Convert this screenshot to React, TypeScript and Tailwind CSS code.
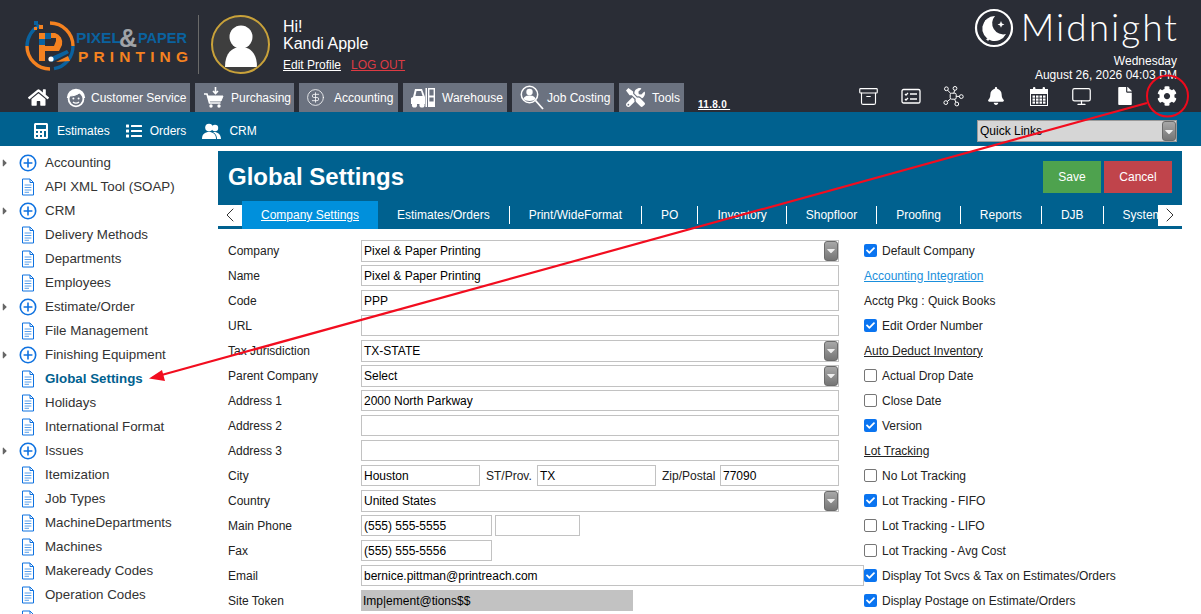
import React from "react";
import {
  FaBell,
  FaCalculator,
  FaCog,
  FaFile,
  FaHome,
  FaList,
  FaTools,
  FaCheck,
  FaCaretDown,
  FaCaretRight,
} from "react-icons/fa";
import { Archive, ChevronLeft, ChevronRight, CircleDollarSign, Monitor } from "lucide-react";

const font = { fontFamily: '"Liberation Sans", Arial, sans-serif' };

const Logo = () => (
  <svg width="172" height="60" viewBox="0 0 172 60" className="shrink-0">
    {/* ring */}
    <g fill="none" strokeWidth="3.4">
      <path d="M26 3 A23 23 0 0 1 49 26" stroke="#f58220" />
      <path d="M49 26 A23 23 0 0 1 30 48.7" stroke="#0a629f" />
      <path d="M26 49 A23 23 0 0 1 3 26" stroke="#f58220" />
      <path d="M3 26 A23 23 0 0 1 16 5.3" stroke="#0a629f" />
    </g>
    <rect x="10" y="1" width="4" height="4" fill="#0a629f" />
    <rect x="15" y="5" width="4" height="4" fill="#f58220" />
    <rect x="10" y="7" width="3" height="3" fill="#f58220" />
    {/* P */}
    <rect x="15" y="13" width="6" height="6" fill="#f58220" />
    <rect x="21" y="13" width="6" height="6" fill="#0a629f" />
    <rect x="15" y="19" width="6" height="6" fill="#0a629f" />
    <rect x="15" y="25" width="6" height="16" fill="#f58220" />
    <path d="M27 13 h4 a10 10 0 0 1 7 12 l-3 6 h-14 v-5 h9 l2 -5 v-3 h-5z" fill="#f58220" />
    <path d="M25 38 L43 30 L45 33 L28 42 Z" fill="#0a629f" />
    <circle cx="27" cy="39" r="2.6" fill="#fff" />
    <path d="M32 42 L44 36 L46 41 Z" fill="#f58220" />
    <text x="52" y="23" fontSize="15" fontWeight="700" fill="#0a629f" style={font} textLength="45" lengthAdjust="spacingAndGlyphs">
      PIXEL
    </text>
    <text x="114" y="23" fontSize="15" fontWeight="700" fill="#0a629f" style={font} textLength="49" lengthAdjust="spacingAndGlyphs">
      PAPER
    </text>
    <text x="95" y="27" fontSize="25" fontWeight="700" fill="#a0a3a8" style={font}>
      &amp;
    </text>
    <text x="54" y="42" fontSize="15.5" fontWeight="700" fill="#f58220" style={font} textLength="110" lengthAdjust="spacing">
      PRINTING
    </text>
  </svg>
);

const Avatar = () => (
  <div className="flex h-[59px] w-[59px] shrink-0 items-center justify-center overflow-hidden rounded-full border-2 border-[#c9a23a] bg-[#3e3e3e]">
    <svg width="55" height="55" viewBox="0 0 55 55">
      <circle cx="28" cy="20" r="11.5" fill="#fff" />
      <path d="M12 50 C12 36 19 30 28 30 C37 30 44 36 44 50 Z" fill="#fff" />
    </svg>
  </div>
);

const MoonLogo = () => (
  <svg width="40" height="40" viewBox="0 0 40 40" className="shrink-0">
    <circle cx="20" cy="20" r="18" fill="none" stroke="#fff" strokeWidth="2.2" />
    <path d="M21 8 A12.5 12.5 0 1 0 32 26 A11 11 0 0 1 21 8 Z" fill="#fff" />
    <path d="M27 13 l1 2.4 2.4 1 -2.4 1 -1 2.4 -1 -2.4 -2.4 -1 2.4 -1z" fill="#fff" />
    <circle cx="12" cy="13" r="1" fill="#fff" />
    <path d="M14 29 l.7 1.6 1.6 .7 -1.6 .7 -.7 1.6 -.7 -1.6 -1.6 -.7 1.6 -.7z" fill="#fff" />
  </svg>
);

const FaceIcon = () => (
  <svg width="22" height="22" viewBox="0 0 22 22" fill="none" stroke="#fff">
    <path d="M3 11 A8 8 0 0 1 19 11" strokeWidth="2.4" />
    <circle cx="11" cy="12" r="7.4" strokeWidth="1.8" />
    <path d="M4 9 C8 9 13 8 15 5 C16 7 17 8 18 9 L17 5 L11 3 L5 5Z" fill="#fff" strokeWidth="1" />
    <circle cx="8.4" cy="11.6" r="1" fill="#fff" stroke="none" />
    <circle cx="13.6" cy="11.6" r="1" fill="#fff" stroke="none" />
    <path d="M8 15 C9.5 16.6 12.5 16.6 14 15" strokeWidth="1.2" />
  </svg>
);

const CartIcon = () => (
  <svg width="24" height="24" viewBox="0 0 24 24" fill="none" stroke="#fff">
    <path d="M2 8 h3 l2.5 9 h11" strokeWidth="1.6" />
    <path d="M6 10 h15 l-2 5 H7.4z" fill="#fff" strokeWidth="1" />
    <circle cx="9" cy="20" r="1.7" fill="#fff" stroke="none" />
    <circle cx="17" cy="20" r="1.7" fill="#fff" stroke="none" />
    <path d="M13.5 1 v6 M11 5 l2.5 2.5 L16 5" strokeWidth="1.6" />
  </svg>
);

const ForkliftIcon = () => (
  <svg width="26" height="22" viewBox="0 0 26 22" fill="#fff">
    <path d="M3 10 L5 2 H12 L15 10 V17 H1 V11 Z M6.5 4 L5.4 9 H12.6 L11 4Z" fillRule="evenodd" />
    <circle cx="4.5" cy="18" r="2.6" />
    <circle cx="12" cy="18" r="2.6" />
    <rect x="15.5" y="1" width="1.5" height="19" />
    <path d="M18 1 h7 v19 h-7z M19.4 2.6 v6 h4.2 v-6z M19.4 10.4 v4 h4.2 v-4z" fillRule="evenodd" />
  </svg>
);

const SearchPersonIcon = () => (
  <svg width="26" height="26" viewBox="0 0 26 26" fill="none" stroke="#fff">
    <circle cx="10.5" cy="9.5" r="8.2" strokeWidth="1.5" />
    <path d="M16.5 15.5 L24 24" strokeWidth="1.8" />
    <circle cx="10.5" cy="7" r="3.2" fill="#fff" stroke="none" />
    <path d="M4.5 14 C5 11 8 10.4 10.5 10.4 C13 10.4 16 11 16.5 14 C14.5 16.6 6.5 16.6 4.5 14Z" fill="#fff" stroke="none" />
  </svg>
);

const TaskCardIcon = () => (
  <svg width="20" height="17" viewBox="0 0 20 17" fill="none" stroke="#fff" strokeWidth="1.3">
    <rect x="1" y="1.5" width="18" height="13.5" rx="1.6" />
    <path d="M4 6 l1 1 2-2 M4 11 l1 1 2-2" />
    <path d="M9 6 h7 M9 11 h7" strokeWidth="1.6" />
  </svg>
);

const NetworkIcon = () => (
  <svg width="21" height="21" viewBox="0 0 21 21" fill="none" stroke="#fff" strokeWidth="1">
    <rect x="7.2" y="7.2" width="6" height="6" rx="1.4" />
    <circle cx="3.4" cy="2.8" r="1.9" />
    <circle cx="12" cy="2.4" r="1.9" />
    <circle cx="18.3" cy="10.6" r="1.9" />
    <circle cx="13.8" cy="18" r="1.9" />
    <circle cx="2.8" cy="16.6" r="1.9" />
    <path d="M4.6 4.2 L7.8 7.6 M11.6 4.3 L10.8 7.2 M16.4 10.4 H13.2 M12.8 16.2 L11.6 13.2 M4.4 15.4 L7.6 12.8" />
  </svg>
);

const CalendarIcon = () => (
  <svg width="20" height="21" viewBox="0 0 20 21" fill="#fff">
    <path d="M1 3 H19 V20 H1Z M2 8 V19 H18 V8Z" fillRule="evenodd" />
    <rect x="4" y="1" width="2.4" height="4" rx="1" />
    <rect x="13.6" y="1" width="2.4" height="4" rx="1" />
    {[3.5, 7, 10.5, 14].map((x) =>
      [9.5, 12.5, 15.5].map((y) => <rect key={`${x}-${y}`} x={x} y={y} width="2.5" height="2.2" />),
    )}
  </svg>
);

const CrmIcon = () => (
  <svg width="19" height="17" viewBox="0 0 19 17" fill="#fff">
    <circle cx="7" cy="4.6" r="3.8" />
    <path d="M0 16 C0 11 3 9 7 9 C11 9 14 11 14 16Z" />
    <circle cx="13" cy="5" r="3.2" />
    <path d="M11 9 C15 8.5 19 11 19 16 H15 C15 13 14 11 11 9Z" />
  </svg>
);

const PlusIcon = () => (
  <svg width="18" height="18" viewBox="0 0 18 18" fill="none" stroke="#0f72e0" className="shrink-0">
    <circle cx="9" cy="9" r="7.7" strokeWidth="1.6" />
    <path d="M9 4.6 V13.4 M4.6 9 H13.4" strokeWidth="1.6" />
  </svg>
);

const DocIcon = () => (
  <svg width="18" height="18" viewBox="0 0 18 18" fill="none" stroke="#0f72e0" className="shrink-0">
    <path d="M3.5 1 H11 L14.5 4.5 V17 H3.5 Z" strokeWidth="1" />
    <path d="M11 1 V4.5 H14.5" strokeWidth="1" />
    <path d="M5.6 7 H12.4 M5.6 9.5 H12.4 M5.6 12 H12.4 M5.6 14.3 H10" strokeWidth="1" stroke="#5ba0ea" />
  </svg>
);

const navTabs = [
  { label: "Customer Service", icon: <FaceIcon />, w: "w-[132px]", gap: "gap-[4px]" },
  { label: "Purchasing", icon: <CartIcon />, w: "w-[99px]", gap: "gap-[5px]" },
  { label: "Accounting", icon: <CircleDollarSign size={19} strokeWidth={1} color="#fff" />, w: "w-[99px]", gap: "gap-[9px]" },
  { label: "Warehouse", icon: <ForkliftIcon />, w: "w-[104px]", gap: "gap-[6px]" },
  { label: "Job Costing", icon: <SearchPersonIcon />, w: "w-[102px]", gap: "gap-[2px]" },
  { label: "Tools", icon: <FaTools size={19} color="#fff" />, w: "w-[65px]", gap: "gap-[7px]" },
];

const sideItems: [string, boolean][] = [
  ["Accounting", true],
  ["API XML Tool (SOAP)", false],
  ["CRM", true],
  ["Delivery Methods", false],
  ["Departments", false],
  ["Employees", false],
  ["Estimate/Order", true],
  ["File Management", false],
  ["Finishing Equipment", true],
  ["Global Settings", false],
  ["Holidays", false],
  ["International Format", false],
  ["Issues", true],
  ["Itemization", false],
  ["Job Types", false],
  ["MachineDepartments", false],
  ["Machines", false],
  ["Makeready Codes", false],
  ["Operation Codes", false],
  ["Order Import Setup", false],
];

const settingTabs = [
  "Estimates/Orders",
  "Print/WideFormat",
  "PO",
  "Inventory",
  "Shopfloor",
  "Proofing",
  "Reports",
  "DJB",
  "System",
];

const Input = ({ value = "", className = "flex-1" }: { value?: string; className?: string }) => (
  <div className={`flex h-[21px] shrink-0 items-center border border-[#c2c2c2] pl-[2px] text-[12px] text-black ${className}`}>
    {value}
  </div>
);

const SelectArrow = () => (
  <div className="flex h-[20px] w-[14px] items-center justify-center rounded-[3px] border border-[#6b6b6b] bg-linear-to-b from-[#a8a8a8] to-[#767676]">
    <FaCaretDown size={13} color="#efefef" />
  </div>
);

const SelectBox = ({ value }: { value: string }) => (
  <div className="flex h-[22px] w-[478px] shrink-0 items-center justify-between border border-[#c2c2c2] pl-[2px] text-[12px] text-black">
    {value}
    <SelectArrow />
  </div>
);

const Row = ({ label, children }: { label: string; children: React.ReactNode }) => (
  <div className="flex h-[25px] items-center">
    <div className="w-[133px] shrink-0 text-[12px] text-[#222]">{label}</div>
    {children}
  </div>
);

const Check = ({ label, on = false }: { label: string; on?: boolean }) => (
  <div className="flex h-[25px] items-center gap-[5px] text-[12px] text-[#222]">
    {on ? (
      <div className="flex h-[13px] w-[13px] items-center justify-center rounded-[2px] bg-[#0a74f0]">
        <FaCheck size={9} color="#fff" />
      </div>
    ) : (
      <div className="h-[13px] w-[13px] rounded-[2px] border border-[#767676] bg-white" />
    )}
    {label}
  </div>
);

const Heading = ({ label, className = "text-[#222]" }: { label: string; className?: string }) => (
  <div className={`flex h-[25px] items-center text-[12px] underline ${className}`}>{label}</div>
);

export default function App() {
  return (
    <div className="relative h-[614px] w-[1201px] overflow-hidden bg-white" style={font}>
      {/* top header */}
      <header className="h-[112px] bg-[#2a2d36] text-white">
        <div className="flex h-[83px] justify-between pr-6">
          <div className="flex items-start">
            <div className="ml-[24px] mt-[20px] w-[174px]">
              <Logo />
            </div>
            <div className="mt-[15px] h-[59px] w-px bg-[#6a6a6a]" />
            <div className="ml-[12px] mt-[15px]">
              <Avatar />
            </div>
            <div className="ml-[13px] mt-[18px]">
              <div className="text-[16px] leading-[17px]">Hi!</div>
              <div className="text-[16px] leading-[18px]">Kandi Apple</div>
              <div className="mt-[5px] flex gap-[10px] text-[12px] leading-[14px]">
                <span className="underline">Edit Profile</span>
                <span className="text-[#dd3b44] underline">LOG OUT</span>
              </div>
            </div>
          </div>
          <div className="flex flex-col items-end">
            <div className="-mr-[2px] mt-[8px] flex items-center gap-[7px]">
              <MoonLogo />
              <span className="-mt-[2px] text-[37px] font-light leading-[40px] tracking-[2px]" style={{ fontFamily: "Lato, sans-serif" }}>
                Midnight
              </span>
            </div>
            <div className="mt-[6px] text-right text-[12px] leading-[14px]">
              <div>Wednesday</div>
              <div>August 26, 2026 04:03 PM</div>
            </div>
          </div>
        </div>
        <div className="flex h-[29px] items-end">
          <div className="ml-[28px] flex h-[29px] w-[30px] items-start pt-[4px]">
            <FaHome size={21} color="#fff" />
          </div>
          {navTabs.map((t, i) => (
            <div
              key={t.label}
              className={`flex h-[29px] items-center bg-[#6b7280] pl-[7px] text-[12px] ${t.w} ${t.gap} ${i < navTabs.length - 1 ? "mr-[5px]" : ""}`}
            >
              {t.icon}
              <span className="whitespace-nowrap">{t.label}</span>
            </div>
          ))}
          <span className="mb-[2px] ml-[14px] text-[10px] font-bold leading-[11px] tracking-[0.3px] underline">11.8.0&nbsp;</span>
          <div className="ml-auto flex h-[32px] items-center pr-[13px]">
            <div className="flex w-[42px] justify-center"><Archive size={21} strokeWidth={1.3} color="#fff" /></div>
            <div className="flex w-[43px] justify-center"><TaskCardIcon /></div>
            <div className="flex w-[42px] justify-center"><NetworkIcon /></div>
            <div className="flex w-[43px] justify-center"><FaBell size={18} color="#fff" /></div>
            <div className="flex w-[43px] justify-center"><CalendarIcon /></div>
            <div className="flex w-[43px] justify-center"><Monitor size={21} strokeWidth={1.4} color="#fff" /></div>
            <div className="flex w-[43px] justify-center"><FaFile size={18} color="#fff" /></div>
            <div className="flex w-[42px] justify-center"><FaCog size={20} color="#fff" /></div>
          </div>
        </div>
      </header>

      {/* second bar */}
      <div className="flex h-[34px] items-center bg-[#00618f] pr-[24px] pt-[4px] text-[12px] text-white">
        <div className="ml-[33px] flex items-center">
          <FaCalculator size={16} />
          <span className="ml-[8px]">Estimates</span>
          <FaList size={16} className="ml-[16px]" />
          <span className="ml-[8px]">Orders</span>
          <span className="ml-[16px]"><CrmIcon /></span>
          <span className="ml-[8px]">CRM</span>
        </div>
        <div className="ml-auto flex h-[22px] w-[200px] items-center justify-between border border-[#9a9a9a] bg-[#d6d6d6] pl-[2px] text-[12px] text-black">
          Quick Links
          <SelectArrow />
        </div>
      </div>

      <div className="flex pt-[5px]">
        {/* sidebar */}
        <aside className="w-[218px] shrink-0">
          {sideItems.map(([label, folder]) => (
            <div key={label} className="flex h-[24px] items-center text-[13.33px] text-[#333]">
              <div className="-ml-px flex w-[20px] shrink-0 justify-start">
                {folder && <FaCaretRight size={12} color="#666" />}
              </div>
              {folder ? <PlusIcon /> : <DocIcon />}
              <span className={`ml-[8px] ${label === "Global Settings" ? "font-bold text-[#00618f]" : ""}`}>{label}</span>
            </div>
          ))}
        </aside>

        {/* main */}
        <main className="w-[964px] shrink-0">
          <div className="bg-[#00618f]">
            <div className="flex h-[50px] items-center justify-between pl-[10px] pr-[10px] pt-[2px] text-white">
              <h1 className="text-[24px] font-bold">Global Settings</h1>
              <div className="flex gap-[3px] text-[12px]">
                <div className="flex h-[32px] w-[58px] items-center justify-center bg-[#4ea24e]">Save</div>
                <div className="flex h-[32px] w-[68px] items-center justify-center bg-[#c0444b]">Cancel</div>
              </div>
            </div>
            <div className="flex h-[28px] items-center text-[12px] text-white">
              <div className="flex h-[21px] w-[24px] shrink-0 items-center justify-center bg-white">
                <ChevronLeft size={24} strokeWidth={1} color="#333" />
              </div>
              <div className="flex h-[28px] min-w-0 flex-1 items-center overflow-hidden">
                <div className="flex h-[28px] w-[136px] shrink-0 items-center justify-center bg-[#0090dc] underline">
                  Company Settings
                </div>
                {settingTabs.map((t, i) => (
                  <div
                    key={t}
                    className={`flex h-[18px] shrink-0 items-center whitespace-nowrap px-[19px] ${i < settingTabs.length - 1 ? "border-r border-white" : ""}`}
                  >
                    {t}
                  </div>
                ))}
              </div>
              <div className="flex h-[21px] w-[24px] shrink-0 items-center justify-center bg-white">
                <ChevronRight size={24} strokeWidth={1} color="#333" />
              </div>
            </div>
          </div>

          <div className="flex pl-[10px] pt-[9px]">
            <div className="w-[611px] shrink-0">
              <Row label="Company"><SelectBox value="Pixel & Paper Printing" /></Row>
              <Row label="Name"><Input value="Pixel & Paper Printing" className="w-[478px]" /></Row>
              <Row label="Code"><Input value="PPP" className="w-[478px]" /></Row>
              <Row label="URL"><Input className="w-[478px]" /></Row>
              <Row label="Tax Jurisdiction"><SelectBox value="TX-STATE" /></Row>
              <Row label="Parent Company"><SelectBox value="Select" /></Row>
              <Row label="Address 1"><Input value="2000 North Parkway" className="w-[478px]" /></Row>
              <Row label="Address 2"><Input className="w-[478px]" /></Row>
              <Row label="Address 3"><Input className="w-[478px]" /></Row>
              <Row label="City">
                <Input value="Houston" className="w-[119px]" />
                <span className="ml-[6px] w-[51px] text-[12px] text-[#222]">ST/Prov.</span>
                <Input value="TX" className="w-[119px]" />
                <span className="ml-[6px] w-[58px] text-[12px] text-[#222]">Zip/Postal</span>
                <Input value="77090" className="w-[119px]" />
              </Row>
              <Row label="Country"><SelectBox value="United States" /></Row>
              <Row label="Main Phone">
                <Input value="(555) 555-5555" className="w-[131px]" />
                <Input className="ml-[3px] w-[85px]" />
              </Row>
              <Row label="Fax"><Input value="(555) 555-5556" className="w-[131px]" /></Row>
              <Row label="Email"><Input value="bernice.pittman@printreach.com" className="w-[503px]" /></Row>
              <Row label="Site Token">
                <div className="flex h-[21px] w-[272px] items-center bg-[#c2c2c2] pl-[2px] text-[12px] text-black">
                  Imp|ement@tions$$
                </div>
              </Row>
            </div>
            <div className="pl-[25px]">
              <Check label="Default Company" on />
              <Heading label="Accounting Integration" className="text-[#1a8fdc]" />
              <div className="flex h-[25px] items-center text-[12px] text-[#222]">Acctg Pkg : Quick Books</div>
              <Check label="Edit Order Number" on />
              <Heading label="Auto Deduct Inventory" />
              <Check label="Actual Drop Date" />
              <Check label="Close Date" />
              <Check label="Version" on />
              <Heading label="Lot Tracking" />
              <Check label="No Lot Tracking" />
              <Check label="Lot Tracking - FIFO" on />
              <Check label="Lot Tracking - LIFO" />
              <Check label="Lot Tracking - Avg Cost" />
              <Check label="Display Tot Svcs & Tax on Estimates/Orders" on />
              <Check label="Display Postage on Estimate/Orders" on />
            </div>
          </div>
        </main>
      </div>

      {/* red annotation drawn over the page */}
      <svg className="pointer-events-none absolute left-0 top-0" width="1201" height="614">
        <circle cx="1167.5" cy="96" r="20.5" fill="none" stroke="#ee0a1c" strokeWidth="2" />
        <path d="M1147 103 L158 376" stroke="#f20d1f" strokeWidth="2.2" fill="none" />
        <path d="M149 378.5 L162 370 L165 381 Z" fill="#f20d1f" />
      </svg>
    </div>
  );
}
